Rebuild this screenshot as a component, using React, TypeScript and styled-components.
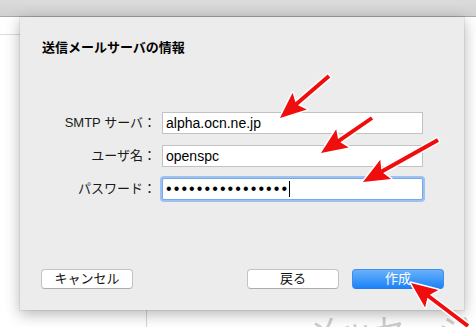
import React from "react";
import styled, { createGlobalStyle } from "styled-components";

const Global = createGlobalStyle`
  html, body { margin: 0; padding: 0; background: #fff; }
  body { font-family: "Liberation Sans", "Noto Sans CJK JP", sans-serif; }
`;

const Window = styled.div`
  position: relative;
  width: 476px;
  height: 327px;
  overflow: hidden;
  background: #fff;
  display: flex;
  flex-direction: column;
`;

const Toolbar = styled.div`
  flex-shrink: 0;
  height: 16px;
  background: linear-gradient(#dbdbdb, #d1d1d1);
  border-bottom: 1px solid #a8a8a8;
`;

const Body = styled.div`
  flex: 1;
  display: flex;
  min-height: 0;
`;

const Sidebar = styled.div`
  width: 146px;
  flex-shrink: 0;
  border-right: 1px solid #d6d6d6;
`;

const SidebarHeader = styled.div`
  height: 17px;
  border-bottom: 1px solid #dcdcdc;
`;

const Main = styled.div`
  flex: 1;
  padding: 291px 0 0 160px;
`;

const Placeholder = styled.div`
  font-family: "Noto Sans CJK JP", sans-serif;
  font-size: 32px;
  line-height: 40px;
  color: #cdcdcd;
  white-space: nowrap;
  letter-spacing: 1px;
`;

const Sheet = styled.div`
  position: absolute;
  left: 20px;
  top: 17px;
  width: 444px;
  height: 293px;
  box-sizing: border-box;
  background: #ececec;
  box-shadow: 0 4px 14px rgba(0, 0, 0, 0.3), 0 0 0 1px rgba(0, 0, 0, 0.06);
  display: flex;
  flex-direction: column;
  padding: 23px 20px 21px 21px;
`;

const Title = styled.div`
  font-weight: bold;
  font-size: 13px;
  line-height: 16px;
  color: #000;
  margin-left: 1px;
`;

const Form = styled.div`
  margin-top: 56px;
  display: grid;
  grid-template-columns: 115px 261px;
  column-gap: 6px;
  row-gap: 11px;
  align-items: center;
`;

const Label = styled.div`
  text-align: right;
  font-size: 13px;
  line-height: 16px;
  color: #1a1a1a;
  white-space: nowrap;
`;

const Field = styled.div<{ $focused?: boolean }>`
  height: 22px;
  box-sizing: border-box;
  background: #fff;
  border: 1px solid ${(p) => (p.$focused ? "#7aa7e6" : "#c2c2c2")};
  box-shadow: ${(p) => (p.$focused ? "0 0 0 2px #9cc2f3" : "none")};
  border-radius: ${(p) => (p.$focused ? "2px" : "0")};
  padding: 0 3px;
  display: flex;
  align-items: center;
  font-size: 14px;
  color: #000;
  white-space: nowrap;
`;

const Dots = styled.span`
  font-size: 16px;
  letter-spacing: 2.1px;
  line-height: 16px;
`;

const Caret = styled.span`
  display: inline-block;
  width: 1px;
  height: 16px;
  background: #000;
`;

const Spacer = styled.div`
  flex: 1;
`;

const ButtonRow = styled.div`
  display: flex;
  gap: 13px;
`;

const Button = styled.button<{ $primary?: boolean; $push?: boolean }>`
  width: 92px;
  height: 20px;
  padding: 0;
  margin: 0;
  margin-left: ${(p) => (p.$push ? "auto" : "0")};
  box-sizing: border-box;
  border-radius: 4px;
  font-family: "Liberation Sans", "Noto Sans CJK JP", sans-serif;
  font-size: 13px;
  line-height: 18px;
  border: 1px solid ${(p) => (p.$primary ? "#3d8ef0" : "#c3c3c3")};
  border-bottom-color: ${(p) => (p.$primary ? "#2a7be8" : "#adadad")};
  background: ${(p) =>
    p.$primary ? "linear-gradient(#69b1fb, #1c83f6)" : "#fff"};
  color: ${(p) => (p.$primary ? "#fff" : "#111")};
`;

type Pt = [number, number];

function arrowPoints(tail: Pt, tip: Pt): string {
  const dx = tip[0] - tail[0];
  const dy = tip[1] - tail[1];
  const len = Math.hypot(dx, dy);
  const ux = dx / len;
  const uy = dy / len;
  const nx = -uy;
  const ny = ux;
  const s = 2;
  const L = 26;
  const W = 11;
  const notch = 4;
  const bx = tip[0] - (L - notch) * ux;
  const by = tip[1] - (L - notch) * uy;
  const hx = tip[0] - L * ux;
  const hy = tip[1] - L * uy;
  const pts: Pt[] = [
    [tail[0] + s * nx, tail[1] + s * ny],
    [bx + s * nx, by + s * ny],
    [hx + W * nx, hy + W * ny],
    tip,
    [hx - W * nx, hy - W * ny],
    [bx - s * nx, by - s * ny],
    [tail[0] - s * nx, tail[1] - s * ny],
  ];
  return pts.map((p) => `${p[0].toFixed(1)},${p[1].toFixed(1)}`).join(" ");
}

const Overlay = styled.svg`
  position: absolute;
  left: 0;
  top: 0;
  pointer-events: none;
`;

const arrows: [Pt, Pt][] = [
  [[329, 76], [280, 118]],
  [[372, 118], [321, 153]],
  [[438, 140], [363, 182]],
  [[468, 326], [411, 283]],
];

export default function App() {
  return (
    <>
      <Global />
      <Window>
        <Toolbar />
        <Body>
          <Sidebar>
            <SidebarHeader />
          </Sidebar>
          <Main>
            <Placeholder>メッセージ</Placeholder>
          </Main>
        </Body>
        <Sheet>
          <Title>送信メールサーバの情報</Title>
          <Form>
            <Label>SMTP サーバ：</Label>
            <Field>alpha.ocn.ne.jp</Field>
            <Label>ユーザ名：</Label>
            <Field>openspc</Field>
            <Label>パスワード：</Label>
            <Field $focused>
              <Dots>{"••••••••••••••••"}</Dots>
              <Caret />
            </Field>
          </Form>
          <Spacer />
          <ButtonRow>
            <Button>キャンセル</Button>
            <Button $push>戻る</Button>
            <Button $primary>作成</Button>
          </ButtonRow>
        </Sheet>
        <Overlay width={476} height={327} viewBox="0 0 476 327">
          {arrows.map(([t, p], i) => (
            <polygon
              key={i}
              points={arrowPoints(t, p)}
              fill="#f00d0d"
              stroke="#fff"
              strokeWidth={3}
              strokeLinejoin="round"
              paintOrder="stroke"
            />
          ))}
        </Overlay>
      </Window>
    </>
  );
}
